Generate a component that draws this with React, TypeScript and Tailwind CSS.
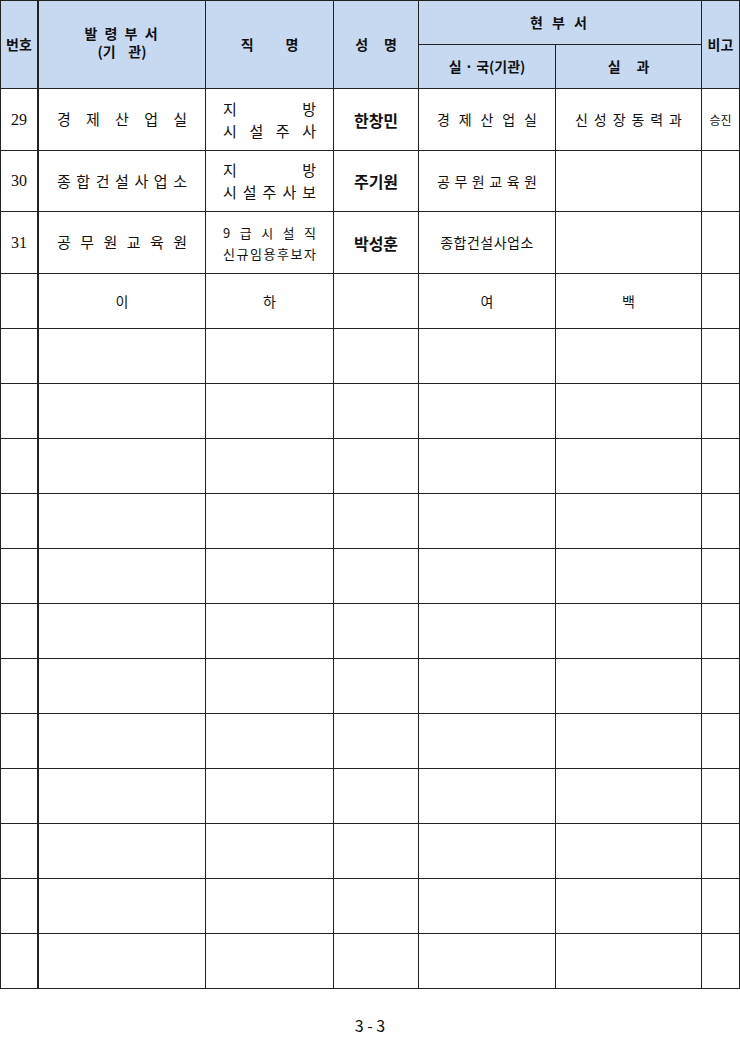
import React from "react";

const KR = { fontFamily: '"Noto Sans CJK KR", "Noto Sans", sans-serif' } as React.CSSProperties;
const SERIF = { fontFamily: '"Liberation Serif", "Noto Serif CJK KR", serif' } as React.CSSProperties;

function Dist({ text, className = "" }: { text: string; className?: string }) {
  return (
    <div className={"flex justify-between w-full " + className}>
      {Array.from(text).map((c, i) => (
        <span key={i}>{c}</span>
      ))}
    </div>
  );
}

const cell = "border-r border-b border-[#222] flex items-center justify-center";
const head = cell + " bg-[#c6d9f1] font-bold text-[14px] text-[#111]";

export default function App() {
  const empty = Array.from({ length: 12 });
  return (
    <div className="w-[740px] bg-white text-[#111]" style={KR}>
      <div className="grid grid-cols-[38px_167px_128px_85px_137px_146px_38px] grid-rows-[44px_44px_62px_61px_62px_55px_repeat(12,55px)] border-l border-t border-[#222]">
        {/* header */}
        <div className={head + " row-span-2 border-r-2"}>번호</div>
        <div className={head + " row-span-2 flex-col leading-[18px] pb-[6px]"}>
          <span className="tracking-[2px]">발 령 부 서</span>
          <span className="whitespace-pre">(기    관)</span>
        </div>
        <div className={head + " row-span-2 whitespace-pre"}>직          명</div>
        <div className={head + " row-span-2 whitespace-pre"}>성     명</div>
        <div className={head + " col-span-2 tracking-[3px]"}>현 부 서</div>
        <div className={head + " row-span-2 text-[13px]"}>비고</div>
        <div className={head + " whitespace-pre"}>실 · 국(기관)</div>
        <div className={head + " whitespace-pre"}>실     과</div>

        {/* row 29 */}
        <div className={cell + " border-r-2 text-[16px]"} style={SERIF}>29</div>
        <div className={cell + " px-[18px] text-[15px]"}><Dist text="경제산업실" /></div>
        <div className={cell + " flex-col px-[17px] text-[15px] leading-[22px]"}>
          <Dist text="지방" />
          <Dist text="시설주사" />
        </div>
        <div className={cell + " font-bold text-[16px]"}>한창민</div>
        <div className={cell + " px-[18px] text-[14px]"}><Dist text="경제산업실" /></div>
        <div className={cell + " px-[19px] text-[14px]"}><Dist text="신성장동력과" /></div>
        <div className={cell + " text-[12px]"}>승진</div>

        {/* row 30 */}
        <div className={cell + " border-r-2 text-[16px]"} style={SERIF}>30</div>
        <div className={cell + " px-[18px] text-[15px]"}><Dist text="종합건설사업소" /></div>
        <div className={cell + " flex-col px-[17px] text-[15px] leading-[22px]"}>
          <Dist text="지방" />
          <Dist text="시설주사보" />
        </div>
        <div className={cell + " font-bold text-[16px]"}>주기원</div>
        <div className={cell + " px-[18px] text-[14px]"}><Dist text="공무원교육원" /></div>
        <div className={cell}></div>
        <div className={cell}></div>

        {/* row 31 */}
        <div className={cell + " border-r-2 text-[16px]"} style={SERIF}>31</div>
        <div className={cell + " px-[18px] text-[15px]"}><Dist text="공무원교육원" /></div>
        <div className={cell + " flex-col px-[17px] text-[13px] leading-[21px]"}>
          <Dist text="9급시설직" />
          <Dist text="신규임용후보자" />
        </div>
        <div className={cell + " font-bold text-[16px]"}>박성훈</div>
        <div className={cell + " px-[18px] text-[14px] tracking-[0.5px]"}>종합건설사업소</div>
        <div className={cell}></div>
        <div className={cell}></div>

        {/* 이하여백 */}
        <div className={cell + " border-r-2"}></div>
        <div className={cell + " text-[14px]"}>이</div>
        <div className={cell + " text-[14px]"}>하</div>
        <div className={cell}></div>
        <div className={cell + " text-[14px]"}>여</div>
        <div className={cell + " text-[14px]"}>백</div>
        <div className={cell}></div>

        {empty.map((_, i) => (
          <React.Fragment key={i}>
            <div className={cell + " border-r-2"}></div>
            <div className={cell}></div>
            <div className={cell}></div>
            <div className={cell}></div>
            <div className={cell}></div>
            <div className={cell}></div>
            <div className={cell}></div>
          </React.Fragment>
        ))}
      </div>
      <div className="h-[48px] pt-[26px] text-center text-[16px] leading-[20px] whitespace-pre">3 - 3</div>
    </div>
  );
}
